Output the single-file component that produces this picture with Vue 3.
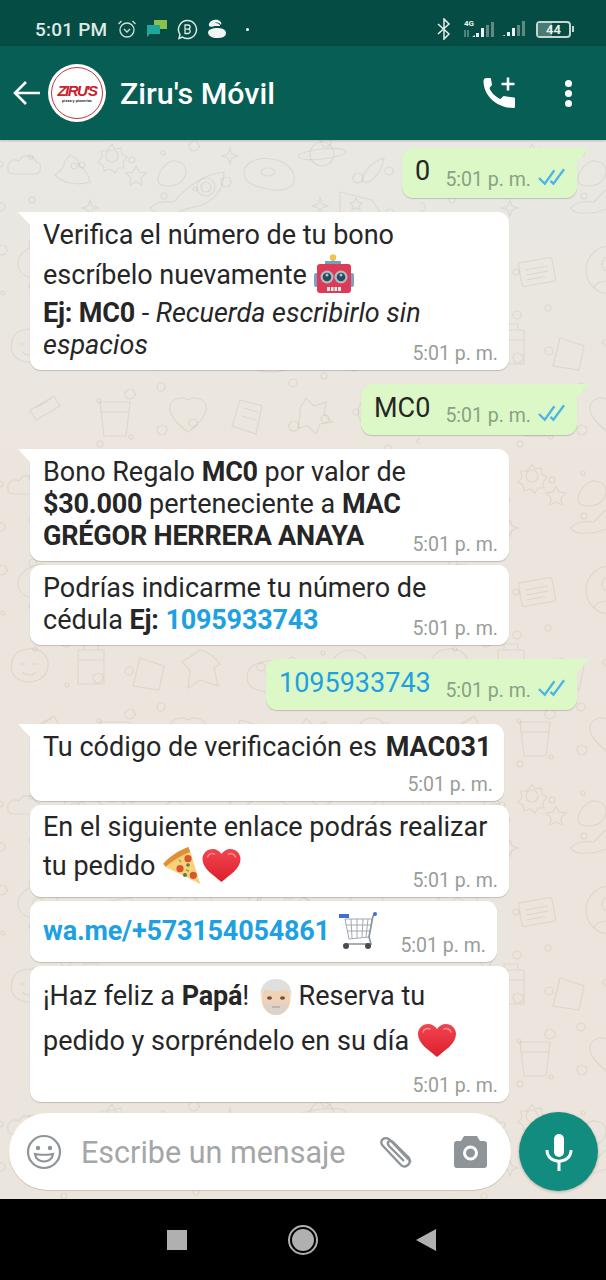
<template>
  <div class="phone">
    <svg width="0" height="0" class="defs">
      <defs>
        <linearGradient id="heartFill" x1="0" y1="0" x2="0" y2="1">
          <stop offset="0" stop-color="#f2444f" />
          <stop offset="1" stop-color="#dc1f2d" />
        </linearGradient>
      </defs>
      <symbol id="heart" viewBox="0 0 38 33">
        <path d="M19 33C11 26 0 20 0 10 0 4 5 0 10 0c4 0 7 2 9 5 2-3 5-5 9-5 5 0 10 4 10 10 0 10-11 16-19 23z" fill="url(#heartFill)" />
        <path d="M5 8c1-3 4-4 7-3M26 5c3-1 6 0 7 3" stroke="#f88d92" stroke-width="1.500" fill="none" stroke-linecap="round" />
      </symbol>
      <symbol id="ticks" viewBox="0 0 28 18">
        <path d="M1 10l6 6L17 2M13 13l3 3L27 1" fill="none" stroke="#4cb4e8" stroke-width="2.400" />
      </symbol>
    </svg>

    <div class="status">
      <span class="clock">5:01 PM</span>
      <svg class="st-icon" width="20" height="20" viewBox="0 0 20 20" fill="none" stroke="#cfe0dc" stroke-width="1.300">
        <circle cx="10" cy="11" r="7" />
        <path d="M1.500 5l3-3M18.500 5l-3-3M7 10l3 3 3-3" />
      </svg>
      <svg class="st-icon" width="22" height="20" viewBox="0 0 22 20">
        <rect x="8" y="1" width="13" height="9" fill="#8bc34a" />
        <path d="M1 6h13v9H4l-3 3z" fill="#1fa79b" />
      </svg>
      <svg class="st-icon" width="21" height="21" viewBox="0 0 21 21" fill="none" stroke="#dfe9e6" stroke-width="1.500">
        <path d="M10.500 1.500a9 9 0 1 1-5 16.500L2 19.500l1-4a9 9 0 0 1 7.500-14z" />
        <path d="M8 6h3a2 2 0 0 1 0 4.200H8zM8 10.200h3.500a2.200 2.200 0 0 1 0 4.300H8z" stroke-width="1.300" />
      </svg>
      <svg class="st-icon" width="20" height="20" viewBox="0 0 20 20" fill="#f1f5f3">
        <path d="M2 7C1 3 6 0 11 1c3 1 4 3 3 5-1-2-4-3-6-2 3 0 5 1 5 3H8C6 8 3 8 2 7z" />
        <path d="M1 13c1-3 5-4 9-4s9 1 9 5-4 5-9 5-9-2-9-6z" />
      </svg>
      <span class="dot"></span>
      <span class="spacer"></span>
      <svg class="st-icon bt" width="14" height="22" viewBox="0 0 14 22" fill="none" stroke="#e6efec" stroke-width="1.500">
        <path d="M1 6l11 10-5 5V1l5 5L1 16" />
      </svg>
      <svg class="st-icon sig-a" width="32" height="20" viewBox="0 0 32 20">
        <text x="1" y="7" class="g4">4G</text>
        <path d="M2 11v7M5 18v-7" stroke="#9db8b2" stroke-width="1" />
        <path d="M9 18l3-2v2zM13 18v-4h3v4zM18 18V9h3v9z" fill="#eef4f2" />
        <path d="M23 18V6h3v12zM28 18V3h3v15z" fill="#5f8a83" />
      </svg>
      <svg class="st-icon sig-b" width="24" height="18" viewBox="0 0 24 18">
        <path d="M0 16l3-1v1zM5 16v-4h3v4zM10 16V8h3v8z" fill="#eef4f2" />
        <path d="M15 16V5h3v11zM20 16V1h3v15z" fill="#5f8a83" />
      </svg>
      <span class="battery"><span class="bat-level"></span><span class="bat-num">44</span></span>
    </div>

    <header class="top">
      <svg width="28" height="26" viewBox="0 0 28 26" fill="none" stroke="#fff" stroke-width="2.600">
        <path d="M27 13H3M13 2L2 13l11 11" />
      </svg>
      <div class="avatar">
        <div class="ring">
          <span class="logo">ZIRU'S</span>
          <span class="logo-sub">pizza y pizzerías</span>
        </div>
      </div>
      <h1 class="name">Ziru's Móvil</h1>
      <svg class="call" width="32" height="32" viewBox="0 0 32 32" fill="#fff">
        <path d="M.5 4C.5 2 2 1 3.500 1H7a1 1 0 0 1 1 1l1 6-2.500 3C8 15.500 12.500 20 17.500 22l3-3 10.500 1.500a1 1 0 0 1 1 1v8a1.500 1.500 0 0 1-1.500 1.500C13 31 .5 18 .5 4z" />
        <path d="M23.700.5h2.600v5.200h5.200v2.600h-5.200v5.200h-2.600V8.300h-5.200V5.700h5.200z" />
      </svg>
      <div class="more"><i></i><i></i><i></i></div>
    </header>

    <main class="chat">
      <svg class="doodles" width="606" height="1060">
        <defs>
          <pattern id="dd" width="420" height="320" patternUnits="userSpaceOnUse">
            <g fill="none" stroke="#8f8370" stroke-opacity="0.15" stroke-width="1.200">
              <path d="M8 30c-2-8 6-12 11-9 3-8 15-6 17 1 6 1 6 10 0 12H14c-4 0-6-2-6-4z" />
              <path d="M55 35c5-3 7-6 9-10 0-5 4-6 6-10 5 1 9 6 9 10 5 3 10 10 11 17-12 4-28 1-35-7z" />
              <circle cx="74" cy="26" r="3" /><circle cx="82" cy="25" r="3" />
              <circle cx="112" cy="16" r="6" />
              <path d="M112 4l3 5 6-1 1 6 5 3-4 5 1 6-6 0-3 5-5-4-6 2-1-6-5-3 4-5-1-6 6 0z" />
              <path d="M136 26l3 6 7 1-5 5 1 7-6-3-6 3 1-7-5-5 7-1z" />
              <path d="M158 40c0-10 10-20 18-19 8 1 12 8 9 15-3 8-11 10-17 10-6 0-10-1-10-6z" />
              <path d="M150 68c8-7 16-7 24-6 10-12 28-28 50-30 0 18-10 30-26 34-8 2-14 3-20 6-12 2-24 2-28-4z" />
              <circle cx="206" cy="47" r="9" /><circle cx="206" cy="47" r="5" />
              <path d="M230 8l2 6 6 2-6 2-2 6-2-6-6-2 6-2z" />
              <path d="M244 34c-1-10 12-18 28-15 14 2 24 12 22 22-1 8-14 11-26 8-13-2-23-7-24-15z" />
              <ellipse cx="268" cy="32" rx="7" ry="4" />
              <circle cx="322" cy="14" r="12" />
              <ellipse cx="322" cy="14" rx="24" ry="5" transform="rotate(-6 322 14)" />
              <path d="M362 40c2-9 10-18 22-22-2 12-9 22-18 25z" />
              <path d="M340 52l32 8 8 12-40 6z" />
              <path d="M356 58l2 4 4 1-3 3 1 4-4-2-4 2 1-4-3-3 4-1z" />
              <path d="M90 60l2 6 6 2-6 2-2 6-2-6-6-2 6-2zM320 58l2 6 6 2-6 2-2 6-2-6-6-2 6-2z" />
              <path d="M26 110c10-8 26-8 30 4 4 10-2 22-14 24-10 2-22-2-24-12-1-6 2-12 8-16z" />
              <circle cx="38" cy="124" r="6" />
              <rect x="100" y="120" width="34" height="24" rx="3" transform="rotate(-10 117 132)" />
              <path d="M106 128h22M106 133h22M106 138h18" transform="rotate(-10 117 132)" />
              <circle cx="190" cy="130" r="24" /><circle cx="190" cy="124" r="8" />
              <path d="M174 148c3-10 28-10 32 0" />
              <path d="M242 132l12-22 6 4-10 24zM250 138l14-24" />
              <path d="M286 108l44 24-8 12-26-8c-10-3-14-18-10-28z" />
              <circle cx="304" cy="124" r="6" />
              <path d="M354 110h26l6 22c2 8-4 14-10 14h-22c-6 0-10-6-8-14z" />
              <path d="M14 196c6-8 22-10 30-2s4 22-6 26-22 2-26-8c-1-6-1-12 2-16z" />
              <path d="M20 204h6M32 204h6M22 212c4 4 10 4 14 0" />
              <path d="M78 190h26v34H78zM84 190v-6h14v6M78 200h26" />
              <path d="M140 198l24 8-5 24-26-4z" />
              <path d="M200 190c8 2 14 6 20 14l-6 4 4 18-18-6-12 8 2-18-8-8z" />
              <path d="M250 208c8-8 28-10 40-4 10 4 14 16 4 22-12 8-34 8-44 0-4-6-4-12 0-18z" />
              <path d="M264 212h4M284 212h4M270 224c4 2 10 2 14 0" />
              <circle cx="350" cy="210" r="20" /><path d="M340 206h4M356 206h4M340 218c6 6 14 6 20 0" />
              <path d="M30 270l24-14 6 10-24 14zM36 268l16-10" />
              <path d="M100 262h30l-4 34h-22zM100 272h30" />
              <path d="M170 266c2-8 12-10 18-6 6-4 16-2 18 6 2 10-10 20-18 26-8-6-20-16-18-26z" />
              <path d="M240 260l22 6-6 28-24-8zM244 268l14 4M242 276l14 4" />
              <path d="M300 268l6-10 8 8 12-4-2 12 8 8-12 2-4 10-8-8-10 2 2-12z" />
              <path d="M372 258c8 0 14 6 14 14s-6 16-14 20c-8-4-14-12-14-20s6-14 14-14z" />
              <circle v-for="d in dots" :key="d.k" :cx="d.x" :cy="d.y" :r="d.r" />
            </g>
          </pattern>
        </defs>
        <rect width="606" height="1060" fill="url(#dd)" />
      </svg>

      <div class="list">
        <div class="msg out tail w-a h50">
          <span class="txt">0</span>
          <span class="meta"><span class="hour">5:01 p. m.</span><svg class="tick" width="27" height="18"><use href="#ticks" /></svg></span>
        </div>

        <div class="msg in tail w1 gap-group">
          <div class="ln h32">Verifica el número de tu bono</div>
          <div class="ln h48">escríbelo nuevamente
            <svg class="emoji" width="40" height="40" viewBox="0 0 40 40">
              <path d="M19 4v6" stroke="#8a96a6" stroke-width="2.500" />
              <circle cx="19" cy="3.500" r="3.200" fill="#f4c14d" />
              <rect x="11" y="7" width="16" height="4" rx="1" fill="#6fa3bd" />
              <rect x="0" y="19" width="4" height="14" rx="2" fill="#7f9fc6" />
              <rect x="36" y="19" width="4" height="14" rx="2" fill="#7f9fc6" />
              <rect x="3" y="10" width="34" height="29" rx="3" fill="#dd3a58" />
              <circle cx="13" cy="23" r="6.500" fill="#aebcc4" /><circle cx="13" cy="23" r="4.300" fill="#274b5c" /><circle cx="13" cy="21" r="1.500" fill="#9fc7d5" />
              <circle cx="27" cy="23" r="6.500" fill="#aebcc4" /><circle cx="27" cy="23" r="4.300" fill="#274b5c" /><circle cx="27" cy="21" r="1.500" fill="#9fc7d5" />
              <rect x="13" y="33" width="14" height="4" fill="#f4e8e4" />
              <path d="M16.500 33v4M20 33v4M23.500 33v4" stroke="#9a3a4c" stroke-width="0.800" />
            </svg>
          </div>
          <div class="ln h28"><b>Ej: MC0</b> - <em>Recuerda escribirlo sin</em></div>
          <div class="ln h36"><em>espacios</em></div>
          <div class="meta-row up20"><span class="hour">5:01 p. m.</span></div>
        </div>

        <div class="msg out tail w-b gap-group">
          <span class="txt">MC0</span>
          <span class="meta"><span class="hour">5:01 p. m.</span><svg class="tick" width="27" height="18"><use href="#ticks" /></svg></span>
        </div>

        <div class="msg in tail w1 gap-group">
          <div class="ln h32">Bono Regalo <b>MC0</b> por valor de</div>
          <div class="ln h32"><b>$30.000</b> perteneciente a <b>MAC</b></div>
          <div class="ln h32"><b>GRÉGOR HERRERA ANAYA</b></div>
          <div class="meta-row up18"><span class="hour">5:01 p. m.</span></div>
        </div>

        <div class="msg in w1 gap">
          <div class="ln h32">Podrías indicarme tu número de</div>
          <div class="ln h32">cédula <b>Ej:</b> <b class="link">1095933743</b></div>
          <div class="meta-row up18"><span class="hour">5:01 p. m.</span></div>
        </div>

        <div class="msg out tail w-c gap-group">
          <span class="txt link">1095933743</span>
          <span class="meta"><span class="hour">5:01 p. m.</span><svg class="tick" width="27" height="18"><use href="#ticks" /></svg></span>
        </div>

        <div class="msg in tail w2 gap-group">
          <div class="ln h32">Tu código de verificación es <b class="code">MAC031</b></div>
          <div class="meta-row down11"><span class="hour">5:01 p. m.</span></div>
        </div>

        <div class="msg in w1 gap">
          <div class="ln h30">En el siguiente enlace podrás realizar</div>
          <div class="ln h48">tu pedido
            <svg class="emoji" width="38" height="38" viewBox="0 0 38 38">
              <path d="M1.300 16.700L26.300 0 38 36.700z" fill="#f6c868" />
              <path d="M1.300 16.700C9 8 18 3 26.300 0l2 5C19 8 10 14 3.500 20z" fill="#df8f38" />
              <path d="M3.500 20L28.300 5 38 36.700z" fill="#f7d27a" />
              <circle cx="26" cy="11.700" r="3.600" fill="#d8552f" />
              <circle cx="18" cy="21.700" r="3.600" fill="#d8552f" />
              <circle cx="31.300" cy="28.300" r="3.600" fill="#d8552f" />
              <circle cx="23" cy="28" r="2" fill="#4f7f55" /><circle cx="26" cy="18" r="1.800" fill="#4f7f55" />
              <path d="M17 13l2 2M24 23l3 1" stroke="#7fae3e" stroke-width="1.400" />
            </svg>
            <svg class="heart" width="39" height="33"><use href="#heart" /></svg>
          </div>
          <div class="meta-row up20"><span class="hour">5:01 p. m.</span></div>
        </div>

        <div class="msg in w3 gap">
          <div class="ln h46"><b class="link">wa.me/+573154054861</b>
            <svg class="emoji cart" width="38" height="38" viewBox="0 0 38 38" fill="none" stroke="#a2aab0" stroke-width="1">
              <path d="M0 4h10" stroke="#3f6fd0" stroke-width="4" />
              <path d="M6 7h27l-3 18-20 2zM7 13h25M8 19h23M12 7l1 19M18 7v19M24 7l-1 18M29 7l-2 18" />
              <path d="M37 2l-3 2-4 21 2 7H6" stroke="#8b949b" stroke-width="1.600" />
              <circle cx="36" cy="2" r="2" fill="#3f6fd0" stroke="none" />
              <circle cx="7" cy="34" r="3" fill="#454c52" stroke="none" />
              <circle cx="29" cy="34" r="3" fill="#454c52" stroke="none" />
            </svg>
          </div>
          <div class="meta-row up19"><span class="hour">5:01 p. m.</span></div>
        </div>

        <div class="msg in w1 gap">
          <div class="ln h46">¡Haz feliz a <b>Papá</b>!
            <svg class="emoji man" width="32" height="37" viewBox="0 0 32 37">
              <ellipse cx="16" cy="21" rx="14.500" ry="16" fill="#f1d2b5" />
              <path d="M1 20C-1 7 7 1 16 1c10 0 17 7 15 19-1-5-3-8-5-9-6 3-15 3-20 0-2 1-4 4-5 9z" fill="#dfdfdd" />
              <ellipse cx="9.500" cy="20" rx="2.500" ry="1.800" fill="#6a5140" />
              <ellipse cx="22.500" cy="20" rx="2.500" ry="1.800" fill="#6a5140" />
              <path d="M4 26c3 1 5 0 12-2 7 2 9 3 12 2-1 8-7 11-12 11S5 34 4 26z" fill="#dbd3cb" />
              <path d="M12 29h8" stroke="#b9a090" stroke-width="1.200" />
            </svg>
            Reserva tu
          </div>
          <div class="ln h44">pedido y sorpréndelo en su día
            <svg class="heart big" width="38" height="33"><use href="#heart" /></svg>
          </div>
          <div class="meta-row down12"><span class="hour">5:01 p. m.</span></div>
        </div>
      </div>

      <div class="composer">
        <div class="input">
          <svg width="36" height="36" viewBox="0 0 36 36" fill="none" stroke="#8f9499" stroke-width="2.200">
            <circle cx="18" cy="18" r="16" />
            <circle cx="12" cy="14" r="2.200" fill="#8f9499" stroke="none" />
            <circle cx="24" cy="14" r="2.200" fill="#8f9499" stroke="none" />
            <path d="M9 20c3 1 15 1 18 0-1 10-17 10-18 0z" />
          </svg>
          <span class="placeholder">Escribe un mensaje</span>
          <svg class="clip" width="36" height="32" viewBox="0 0 36 32" fill="none" stroke="#8f9499" stroke-width="2.400">
            <path d="M33 26L12 4C7-1 0 5 5 10l18 19c4 4 11-1 8-7L15 6c-3-3-7 0-4 4l15 15" />
          </svg>
          <svg width="33" height="32" viewBox="0 0 33 32">
            <path d="M10 0h13l3 5h4a3 3 0 0 1 3 3v21a3 3 0 0 1-3 3H3a3 3 0 0 1-3-3V8a3 3 0 0 1 3-3h4z" fill="#8f9499" />
            <circle cx="16.500" cy="17" r="6" fill="none" stroke="#fff" stroke-width="3" />
          </svg>
        </div>
        <div class="mic">
          <svg width="28" height="38" viewBox="0 0 28 38" fill="none" stroke="#fff" stroke-width="3">
            <rect x="9" y="1" width="10" height="23" rx="5" fill="#fff" stroke="none" />
            <path d="M2 17c0 15 24 15 24 0M14 29v9" />
          </svg>
        </div>
      </div>
    </main>

    <nav class="nav">
      <span class="square"></span>
      <span class="circle"><span></span></span>
      <span class="back"></span>
    </nav>
  </div>
</template>

<script setup>
// little circles scattered between the wallpaper doodles
const dots = []
for (let k = 0; k < 60; k++) {
  dots.push({
    k,
    x: (k * 97 + 31) % 420,
    y: (k * 151 + 17) % 320,
    r: 2 + (k % 4)
  })
}
</script>

<style>
html,
body {
  margin: 0;
  background: #000;
}
</style>

<style scoped>
.phone {
  width: 606px;
  height: 1280px;
  display: flex;
  flex-direction: column;
  overflow: hidden;
  font-family: Roboto, "Liberation Sans", sans-serif;
  color: #262626;
}

.defs {
  position: absolute;
}

.status {
  height: 46px;
  flex: none;
  background: #054c44;
  display: flex;
  align-items: center;
  padding: 12px 35px 0 35px;
  box-sizing: border-box;
  color: #dfe9e6;
}

.clock {
  font-size: 19px;
  font-weight: 500;
  margin-right: 10px;
  letter-spacing: 0.2px;
}

.st-icon {
  margin-right: 9px;
  flex: none;
}

.dot {
  width: 3px;
  height: 3px;
  border-radius: 50%;
  background: #fff;
  margin-left: 10px;
}

.spacer {
  flex: 1;
}

.bt {
  margin-right: 12px;
}

.sig-a {
  margin-right: 7px;
}

.sig-b {
  margin-right: 10px;
}

.g4 {
  font-size: 8px;
  font-weight: 700;
  fill: #eef4f2;
  font-family: Roboto, sans-serif;
}

.battery {
  width: 35px;
  height: 17px;
  box-sizing: border-box;
  border: 2px solid #c4d6d2;
  border-radius: 4px;
  position: relative;
  display: flex;
  align-items: center;
  justify-content: center;
}

.battery::after {
  content: "";
  position: absolute;
  right: -5px;
  top: 3px;
  width: 2px;
  height: 6px;
  background: #c4d6d2;
}

.bat-level {
  position: absolute;
  left: 0;
  top: 0;
  bottom: 0;
  width: 44%;
  background: #4a7a72;
}

.bat-num {
  position: relative;
  font-size: 13px;
  font-weight: 700;
  color: #e6efec;
}

.top {
  height: 94px;
  flex: none;
  background: #075e54;
  display: flex;
  align-items: center;
  padding: 0 34px 0 13px;
  box-sizing: border-box;
  box-shadow: 0 1px 2px rgba(0, 0, 0, 0.2);
  position: relative;
  z-index: 1;
}

.avatar {
  width: 58px;
  height: 58px;
  border-radius: 50%;
  background: #fff;
  margin-left: 7px;
  display: flex;
  align-items: center;
  justify-content: center;
  flex: none;
}

.ring {
  width: 52px;
  height: 52px;
  border-radius: 50%;
  border: 1px solid #c8343d;
  box-sizing: border-box;
  display: flex;
  flex-direction: column;
  align-items: center;
  justify-content: center;
}

.logo {
  font-family: "Liberation Sans", sans-serif;
  font-size: 15px;
  font-weight: 700;
  font-style: italic;
  color: #c8202c;
  letter-spacing: -1.600px;
  line-height: 15px;
}

.logo-sub {
  font-size: 4px;
  line-height: 5px;
  color: #333;
  font-weight: 700;
}

.name {
  flex: 1;
  margin: 0 0 0 14px;
  font-size: 30.400px;
  font-weight: 500;
  color: #fff;
}

.call {
  margin-right: 50px;
}

.more {
  display: flex;
  flex-direction: column;
  gap: 3px;
}

.more i {
  width: 7px;
  height: 7px;
  border-radius: 50%;
  background: #fff;
}

.chat {
  flex: 1;
  position: relative;
  background: linear-gradient(#e9e8e3, #ece5dd 35%);
  display: flex;
  flex-direction: column;
  overflow: hidden;
}

.doodles {
  position: absolute;
  left: 0;
  top: 0;
}

.list {
  flex: 1;
  padding-top: 8px;
  display: flex;
  flex-direction: column;
}

.msg {
  position: relative;
  box-sizing: border-box;
  border-radius: 11px;
  background: #fff;
  box-shadow: 0 1px 1px rgba(0, 0, 0, 0.18);
  font-size: 27px;
  flex: none;
}

.in {
  margin-left: 30px;
  padding: 7px 13px 5px;
}

.out {
  align-self: flex-end;
  margin-right: 29px;
  background: #dcf8c6;
  display: flex;
  align-items: center;
  padding: 0 12px 0 13px;
  height: 51px;
  justify-content: space-between;
}

.out.h50 {
  height: 50px;
}

.tail.in {
  border-top-left-radius: 0;
}

.tail.out {
  border-top-right-radius: 0;
}

.tail::before {
  content: "";
  position: absolute;
  top: 0;
  width: 13px;
  height: 14px;
}

.tail.in::before {
  left: -12px;
  background: #fff;
  clip-path: polygon(0 0, 100% 0, 100% 100%);
}

.tail.out::before {
  right: -12px;
  background: #dcf8c6;
  clip-path: polygon(0 0, 100% 0, 0 100%);
}

.gap-group {
  margin-top: 14px;
}

.gap {
  margin-top: 4px;
}

.w1 {
  width: 479px;
}

.w2 {
  width: 474px;
}

.w3 {
  width: 467px;
}

.w-a {
  width: 175px;
}

.w-b {
  width: 216px;
}

.w-c {
  width: 311px;
}

.ln {
  white-space: nowrap;
}

.ln b {
  font-weight: 700;
  letter-spacing: -0.2px;
}

.ln b.code {
  letter-spacing: 0;
  margin-left: 2px;
}

.h28 {
  height: 28px;
  line-height: 28px;
}

.h30 {
  height: 30px;
  line-height: 30px;
}

.h32 {
  height: 32px;
  line-height: 32px;
}

.h36 {
  height: 36px;
  line-height: 36px;
}

.h44 {
  height: 44px;
  line-height: 44px;
}

.h46 {
  height: 46px;
  line-height: 46px;
}

.h48 {
  height: 48px;
  line-height: 48px;
}

.emoji {
  vertical-align: -10px;
  margin-top: -30px;
}

.cart {
  margin-left: 9px;
}

.man {
  margin: -30px 0 0 4px;
}

.heart {
  vertical-align: -7px;
  margin: -30px 0 0 2px;
}

.heart.big {
  margin-left: 2px;
}

.link {
  color: #1da1e2;
}

.txt {
  margin-top: -4px;
}

.meta {
  display: flex;
  align-items: center;
  gap: 7px;
  margin-top: 12px;
}

.tick {
  margin-bottom: 5px;
}

.hour {
  font-size: 19.500px;
  color: #9a9d98;
}

.out .hour {
  color: #8ba085;
}

.meta-row {
  display: flex;
  justify-content: flex-end;
  margin-right: -2px;
  line-height: 22px;
}

.up18 {
  margin-top: -18px;
}

.up19 {
  margin-top: -19px;
}

.up20 {
  margin-top: -20px;
}

.down11 {
  margin-top: 11px;
}

.down12 {
  margin-top: 12px;
}

.composer {
  flex: none;
  display: flex;
  align-items: center;
  padding: 8px 8px 8px 9px;
  position: relative;
  gap: 8px;
}

.input {
  flex: 1;
  height: 77px;
  border-radius: 39px;
  background: #fff;
  box-shadow: 0 1px 1px rgba(0, 0, 0, 0.15);
  display: flex;
  align-items: center;
  padding: 0 24px 0 17px;
}

.placeholder {
  flex: 1;
  margin-left: 19px;
  font-size: 30.500px;
  color: #a4a6a8;
  padding-top: 2px;
}

.clip {
  margin-right: 40px;
}

.mic {
  width: 79px;
  height: 79px;
  border-radius: 50%;
  background: #128c7e;
  display: flex;
  align-items: center;
  justify-content: center;
  box-shadow: 0 1px 3px rgba(0, 0, 0, 0.25);
  flex: none;
}

.nav {
  height: 81px;
  flex: none;
  background: #000;
  display: flex;
  align-items: center;
  justify-content: center;
  padding-right: 3px;
  box-sizing: border-box;
}

.square {
  width: 20px;
  height: 20px;
  background: #b0b0b0;
  margin-right: 101px;
}

.circle {
  width: 30px;
  height: 30px;
  box-sizing: border-box;
  border: 2px solid #b0b0b0;
  border-radius: 50%;
  padding: 2px;
  display: flex;
  margin-right: 98px;
}

.circle span {
  flex: 1;
  border-radius: 50%;
  background: #b0b0b0;
}

.back {
  width: 0;
  height: 0;
  border-style: solid;
  border-width: 11px 20px 11px 0;
  border-color: transparent #b0b0b0 transparent transparent;
}
</style>
